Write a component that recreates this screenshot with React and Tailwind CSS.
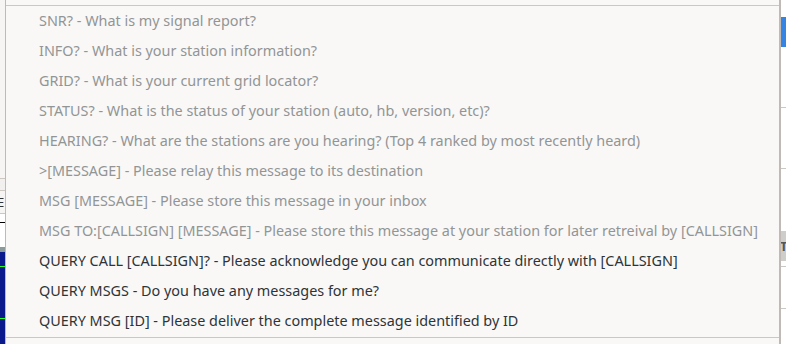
const items = [
  ["SNR? - What is my signal report?", false],
  ["INFO? - What is your station information?", false],
  ["GRID? - What is your current grid locator?", false],
  ["STATUS? - What is the status of your station (auto, hb, version, etc)?", false],
  ["HEARING? - What are the stations are you hearing? (Top 4 ranked by most recently heard)", false],
  [">[MESSAGE] - Please relay this message to its destination", false],
  ["MSG [MESSAGE] - Please store this message in your inbox", false],
  ["MSG TO:[CALLSIGN] [MESSAGE] - Please store this message at your station for later retreival by [CALLSIGN]", false],
  ["QUERY CALL [CALLSIGN]? - Please acknowledge you can communicate directly with [CALLSIGN]", true],
  ["QUERY MSGS - Do you have any messages for me?", true],
  ["QUERY MSG [ID] - Please deliver the complete message identified by ID", true],
]

export default function App() {
  return (
    <div className="relative w-[786px] h-[344px] overflow-hidden bg-[#f6f5f4] font-['Noto_Sans',sans-serif]">
      {/* window behind the menu */}
      <div className="flex h-full justify-between">
        <div className="w-[5px] flex flex-col">
          <div className="h-[178px] bg-[#f6f5f4]" />
          <div className="h-px bg-[#cdc7c2]" />
          <div className="h-[11px] bg-[#f1f0ef]" />
          <div className="h-px bg-[#cdc7c2]" />
          <div className="h-[22px] bg-[#f6f5f4] text-[13px] leading-[22px] text-[#2e3436] overflow-hidden">
            <span className="-ml-[3px]">E</span>
          </div>
          <div className="h-px bg-[#cdc7c2]" />
          <div className="h-[8px] bg-white" />
          <div className="h-px bg-black" />
          <div className="h-[24px] bg-white" />
          <div className="h-[5px] bg-[#8a9a9a]" />
          <div className="flex-1 bg-[#0a1a8c] flex flex-col">
            <div className="h-[14px]" />
            <div className="h-px bg-[#22ff22]" />
            <div className="h-[51px]" />
            <div className="h-px bg-[#22ff22]" />
          </div>
        </div>
        <div className="w-[6px] flex flex-col">
          <div className="h-[17px] bg-white" />
          <div className="h-[30px] bg-[#3584e4]" />
          <div className="h-[60px] bg-white" />
          <div className="h-px bg-[#cdc7c2]" />
          <div className="h-[60px] bg-white" />
          <div className="h-px bg-[#cdc7c2]" />
          <div className="h-[62px] bg-white" />
          <div className="h-[30px] bg-[#cfcdca] text-[13px] font-bold leading-[30px] text-[#555]">T</div>
          <div className="h-[5px] bg-white" />
          <div className="h-px bg-[#cdc7c2]" />
          <div className="h-[41px] bg-white" />
          <div className="h-px bg-[#cdc7c2]" />
          <div className="flex-1 bg-white" />
        </div>
      </div>

      {/* popup menu */}
      <div className="absolute left-[5px] top-0 w-[776px] h-[344px] border-l border-r-2 border-[#bfbab6] bg-[#f9f8f7]">
        <div className="h-[5px]" />
        <div className="h-px bg-[#cdc7c2]" />
        <ul className="flex flex-col">
          {items.map(([label, enabled]) => (
            <li
              key={label}
              className={
                "h-[30px] pl-[33px] pb-px flex items-center text-[14.4px] whitespace-nowrap " +
                (enabled ? "text-[#2e3436]" : "text-[#929595]")
              }
            >
              {label}
            </li>
          ))}
        </ul>
        <div className="h-px mt-[1px] bg-[#cdc7c2]" />
      </div>
    </div>
  )
}
